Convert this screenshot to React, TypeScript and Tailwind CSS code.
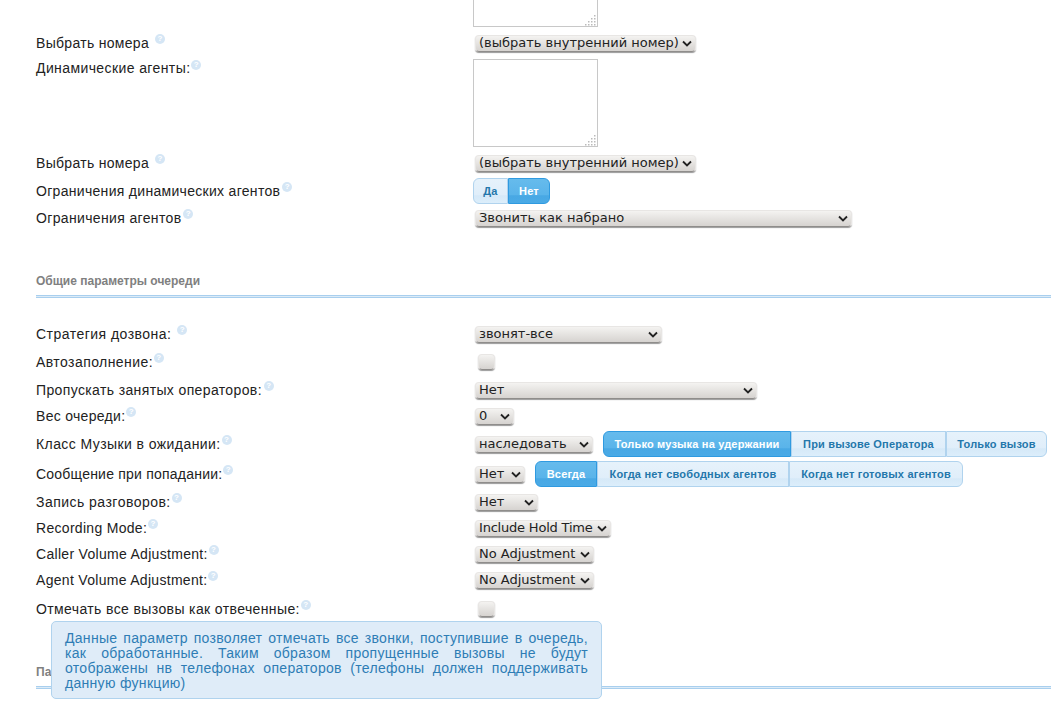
import React from "react";

const label = "font-['Liberation_Sans',sans-serif] text-[14px] leading-[17px] text-[#222] whitespace-nowrap";

function Help({ className = "" }: { className?: string }) {
  return (
    <span className={`inline-flex w-[10px] h-[10px] rounded-full bg-[#d5e6f5] text-white text-[8px] font-bold leading-[10px] justify-center align-top relative ${className}`}>
      ?
    </span>
  );
}

function Select({ text, width, tight }: { text: string; width: string; tight?: boolean }) {
  return (
    <div className={`${width} h-[17px] flex items-center justify-between pl-[3px] pr-[3px] rounded-[4px] border border-[#e8e6e4] border-b-[#8f8d8b] bg-gradient-to-b from-[#f4f3f1] to-[#d6d3d0] shadow-[0_1px_1px_#999] font-['DejaVu_Sans',sans-serif] text-[13px] text-[#222] leading-none`}>
      <span className={`mb-[2px] whitespace-nowrap ${tight ? "tracking-[-0.2px]" : ""}`}>{text}</span>
      <svg width="10" height="7" viewBox="0 0 10 7" className="shrink-0">
        <path d="M1 1.5 L5 5.5 L9 1.5" fill="none" stroke="#222" strokeWidth="1.8" />
      </svg>
    </div>
  );
}

function Check() {
  return <div className="ml-[3px] w-[17px] h-[16px] rounded-[4px] border border-[#e8e6e4] border-b-[#8f8d8b] bg-gradient-to-b from-[#f4f3f1] to-[#d6d3d0] shadow-[0_1px_1px_#999]" />;
}

function Toggle({ text, active, first, last, width }: { text: string; active?: boolean; first?: boolean; last?: boolean; width: string }) {
  return (
    <div
      className={`${width} h-[26px] flex items-center justify-center border font-['Liberation_Sans',sans-serif] text-[11px] font-bold tracking-[0.18px] whitespace-nowrap ${first ? "rounded-l-[6px]" : ""} ${last ? "rounded-r-[6px]" : ""} ${
        active
          ? "border-[#2f9ae0] text-white bg-[linear-gradient(#66bbec_0,#5ab4ea_65%,#48a8e4_70%,#4aaae6_100%)]"
          : "border-[#b0d3ee] text-[#2477ab] bg-[linear-gradient(#e6f2fb_0,#e0eefa_65%,#d6e9f8_70%,#dceefb_100%)]"
      }`}
    >
      {text}
    </div>
  );
}

function Row({ title, help, track, height, children }: { title: string; help: string; track: string; height: string; children?: React.ReactNode }) {
  return (
    <div className={`${height} grid grid-cols-[439px_1fr] items-center`}>
      <div className={`${label} ${track}`}>
        {title}
        <Help className={`${help} -top-[1px]`} />
      </div>
      <div className="flex items-center">{children}</div>
    </div>
  );
}

function Section({ title }: { title: string }) {
  return (
    <div>
      <div className="h-[20px] flex items-center font-['Liberation_Sans',sans-serif] text-[12px] font-bold text-[#808080]">{title}</div>
      <div className="mt-[4px] h-[3px] border-y border-[#a9cfee] bg-[#dcebf7]" />
    </div>
  );
}

function Grip() {
  return (
    <svg width="12" height="12" viewBox="0 0 12 12" className="absolute right-0 bottom-0">
      {[
        [9, 1],
        [6, 4],
        [9, 4],
        [3, 7],
        [6, 7],
        [9, 7],
        [0, 10],
        [3, 10],
        [6, 10],
        [9, 10],
      ].map(([x, y]) => (
        <rect key={`${x}-${y}`} x={x} y={y} width="1.5" height="1.5" fill="#bbb" />
      ))}
    </svg>
  );
}

export default function App() {
  return (
    <div className="relative w-[1056px] h-[710px] overflow-hidden bg-white pl-[36px] pr-[5px]">
      <div className="h-[35px] pl-[437px]">
        <div className="relative w-[125px] h-[27px] border border-[#c8c8c8] border-t-0">
          <Grip />
        </div>
      </div>
      <Row title="Выбрать номера" help="ml-[6px]" track="tracking-[0.3px]" height="h-[17px]">
        <Select text="(выбрать внутренний номер)" width="w-[221px]" />
      </Row>
      <div className="h-[7px]" />
      <div className="h-[88px] grid grid-cols-[437px_1fr]">
        <div className={`${label} tracking-[0.4px] pt-[1px]`}>
          Динамические агенты:
          <Help className="ml-[1px]" />
        </div>
        <div className="relative w-[125px] h-[88px] border border-[#c8c8c8]">
          <Grip />
        </div>
      </div>
      <div className="h-[8px]" />
      <Row title="Выбрать номера" help="ml-[6px]" track="tracking-[0.3px]" height="h-[17px]">
        <Select text="(выбрать внутренний номер)" width="w-[221px]" />
      </Row>
      <div className="h-[6px]" />
      <div className="h-[26px] grid grid-cols-[437px_1fr] items-center">
        <div className={`${label} tracking-[0.3px]`}>
          Ограничения динамических агентов
          <Help className="-top-[1px] ml-[2px]" />
        </div>
        <div className="flex">
          <Toggle text="Да" first width="w-[35px]" />
          <Toggle text="Нет" active last width="w-[42px]" />
        </div>
      </div>
      <div className="h-[6px]" />
      <Row title="Ограничения агентов" help="ml-[2px]" track="tracking-[0.35px]" height="h-[17px]">
        <Select text="Звонить как набрано" width="w-[377px]" />
      </Row>
      <div className="h-[44px]" />
      <Section title="Общие параметры очереди" />

      <div className="h-[28px]" />
      <Row title="Стратегия дозвона:" help="ml-[6px]" track="tracking-[0.47px]" height="h-[17px]">
        <Select text="звонят-все" width="w-[187px]" />
      </Row>
      <div className="h-[10px]" />
      <Row title="Автозаполнение:" help="ml-[1px]" track="tracking-[0.43px]" height="h-[18px]">
        <Check />
      </Row>
      <div className="h-[11px]" />
      <Row title="Пропускать занятых операторов:" help="ml-[2px]" track="tracking-[0.37px]" height="h-[17px]">
        <Select text="Нет" width="w-[282px]" />
      </Row>
      <div className="h-[9px]" />
      <Row title="Вес очереди:" help="ml-[1px]" track="tracking-[0.3px]" height="h-[17px]">
        <Select text="0" width="w-[39px]" />
      </Row>
      <div className="h-[6px]" />
      <Row title="Класс Музыки в ожидании:" help="ml-[1px]" track="tracking-[0.42px]" height="h-[26px]">
        <Select text="наследовать" width="w-[118px]" />
        <div className="flex ml-[10px]">
          <Toggle text="Только музыка на удержании" active first width="w-[188px]" />
          <Toggle text="При вызове Оператора" width="w-[155px]" />
          <Toggle text="Только вызов" last width="w-[101px]" />
        </div>
      </Row>
      <div className="h-[4px]" />
      <Row title="Сообщение при попадании:" help="ml-[1px]" track="tracking-[0.22px]" height="h-[26px]">
        <Select text="Нет" width="w-[50px]" />
        <div className="flex ml-[10px]">
          <Toggle text="Всегда" active first width="w-[62px]" />
          <Toggle text="Когда нет свободных агентов" width="w-[192px]" />
          <Toggle text="Когда нет готовых агентов" last width="w-[174px]" />
        </div>
      </Row>
      <div className="h-[7px]" />
      <Row title="Запись разговоров:" help="ml-[1px]" track="tracking-[0.47px]" height="h-[17px]">
        <Select text="Нет" width="w-[63px]" />
      </Row>
      <div className="h-[9px]" />
      <Row title="Recording Mode:" help="ml-[1px]" track="tracking-[0.3px]" height="h-[17px]">
        <Select text="Include Hold Time" tight width="w-[136px]" />
      </Row>
      <div className="h-[9px]" />
      <Row title="Caller Volume Adjustment:" help="ml-[1px]" track="tracking-[0.3px]" height="h-[17px]">
        <Select text="No Adjustment" width="w-[119px]" />
      </Row>
      <div className="h-[9px]" />
      <Row title="Agent Volume Adjustment:" help="ml-[1px]" track="tracking-[0.3px]" height="h-[17px]">
        <Select text="No Adjustment" width="w-[119px]" />
      </Row>
      <div className="h-[11px]" />
      <Row title="Отмечать все вызовы как отвеченные:" help="ml-[1px]" track="tracking-[0.38px]" height="h-[18px]">
        <Check />
      </Row>
      <div className="h-[44px]" />
      <Section title="Параметры" />

      <div className="absolute left-[51px] top-[621px] w-[551px] h-[78px] rounded-[5px] border border-[#b0d3ee] bg-[#dfecf8] px-[13px] pt-[9px] font-['Liberation_Sans',sans-serif] text-[14px] leading-[15px] tracking-[0.3px] text-[#2e7db5] text-justify">
        Данные параметр позволяет отмечать все звонки, поступившие в очередь, как обработанные. Таким образом пропущенные вызовы не будут отображены нв телефонах операторов (телефоны должен поддерживать данную функцию)
      </div>
    </div>
  );
}
